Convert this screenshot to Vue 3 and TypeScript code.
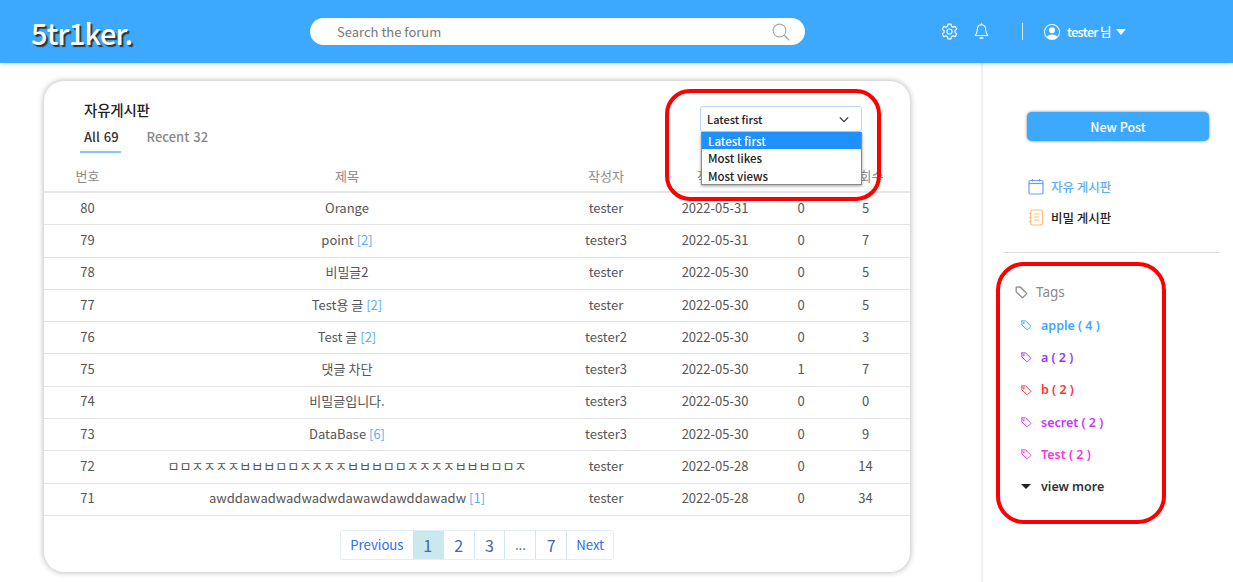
<script setup lang="ts">
interface Row { no: number; title: string; count?: number; author: string; date: string; likes: number; views: number }
const rows: Row[] = [
  { no: 80, title: 'Orange', author: 'tester', date: '2022-05-31', likes: 0, views: 5 },
  { no: 79, title: 'point', count: 2, author: 'tester3', date: '2022-05-31', likes: 0, views: 7 },
  { no: 78, title: '비밀글2', author: 'tester', date: '2022-05-30', likes: 0, views: 5 },
  { no: 77, title: 'Test용 글', count: 2, author: 'tester', date: '2022-05-30', likes: 0, views: 5 },
  { no: 76, title: 'Test 글', count: 2, author: 'tester2', date: '2022-05-30', likes: 0, views: 3 },
  { no: 75, title: '댓글 차단', author: 'tester3', date: '2022-05-30', likes: 1, views: 7 },
  { no: 74, title: '비밀글입니다.', author: 'tester3', date: '2022-05-30', likes: 0, views: 0 },
  { no: 73, title: 'DataBase', count: 6, author: 'tester3', date: '2022-05-30', likes: 0, views: 9 },
  { no: 72, title: 'ㅁㅁㅈㅈㅈㅈㅂㅂㅂㅁㅁㅈㅈㅈㅈㅂㅂㅂㅁㅁㅈㅈㅈㅈㅂㅂㅂㅁㅁㅈ', author: 'tester', date: '2022-05-28', likes: 0, views: 14 },
  { no: 71, title: 'awddawadwadwadwdawawdawddawadw', count: 1, author: 'tester', date: '2022-05-28', likes: 0, views: 34 },
]
const tags = [
  { name: 'apple ( 4 )', color: '#3ca9ff' },
  { name: 'a ( 2 )', color: '#a033ff' },
  { name: 'b ( 2 )', color: '#ff3333' },
  { name: 'secret ( 2 )', color: '#cc33ff' },
  { name: 'Test ( 2 )', color: '#ff33e0' },
]
const tagPath = 'M2 2.5h5.5l6.5 6.5a1 1 0 0 1 0 1.4l-3.6 3.6a1 1 0 0 1-1.4 0L2.5 8V2.5z'
</script>

<template>
  <div class="page">
    <header class="topbar">
      <div class="logo">5tr1ker.</div>
      <div class="search">
        <span class="search-text">Search the forum</span>
        <svg class="search-icon" viewBox="0 0 18 18" width="18" height="18" fill="none" stroke="#a9a9a9" stroke-width="1.1">
          <circle cx="7.5" cy="7.5" r="6.4" /><path d="M12.2 12.2l5 5" stroke-width="1.4" />
        </svg>
      </div>
      <div class="actions">
        <svg class="gear" viewBox="0 0 24 24" width="17" height="17" fill="none" stroke="#fff" stroke-width="1.6" stroke-linejoin="round">
          <circle cx="12" cy="12" r="3.6" />
          <path d="M9.8 1.5h4.4l.6 3.2 2.1 1.2 3.1-1.1 2.2 3.8-2.5 2.1v2.6l2.5 2.1-2.2 3.8-3.1-1.1-2.1 1.2-.6 3.2H9.8l-.6-3.2-2.1-1.2-3.1 1.1-2.2-3.8 2.5-2.1v-2.6L1.8 8.6 4 4.8l3.1 1.1 2.1-1.2z" />
        </svg>
        <svg class="bell" viewBox="0 0 16 18" width="15" height="17" fill="none" stroke="#fff" stroke-width="1.1">
          <path d="M8 1.8c-2.9 0-4.5 2.2-4.5 5 0 3.4-1 5-2.3 6.4h13.6c-1.3-1.4-2.3-3-2.3-6.4 0-2.8-1.6-5-4.5-5z" stroke-linejoin="round" />
          <path d="M8 .4v1.4" /><path d="M6.6 15.8h2.8" stroke-width="1.6" stroke-linecap="round" />
        </svg>
        <span class="vline"></span>
        <svg class="avatar" viewBox="0 0 16 16" width="16" height="16" fill="#fff">
          <path d="M8 9.2a3 3 0 1 0 0-6 3 3 0 0 0 0 6z" />
          <path fill-rule="evenodd" d="M8 0a8 8 0 1 0 0 16A8 8 0 0 0 8 0zM1 8a7 7 0 1 1 12.2 4.7C12.4 11.3 10.4 10.4 8 10.4s-4.400.9-5.200 2.300A7 7 0 0 1 1 8z" />
        </svg>
        <span class="username">tester 님</span>
        <span class="caret"></span>
      </div>
    </header>

    <div class="body">
      <main class="content">
        <section class="card">
          <div class="card-head">
            <div class="titles">
              <h2 class="board-title">자유게시판</h2>
              <div class="tabs">
                <span class="tab active">All 69</span>
                <span class="tab">Recent 32</span>
              </div>
            </div>
            <div class="select-wrap">
              <div class="select">
                <span>Latest first</span>
                <svg viewBox="0 0 12 8" width="10" height="7" fill="none" stroke="#333" stroke-width="1.5"><path d="M1 1.500l5 5 5-5" /></svg>
              </div>
              <ul class="options">
                <li class="selected">Latest first</li>
                <li>Most likes</li>
                <li>Most views</li>
              </ul>
            </div>
          </div>

          <table class="board">
            <colgroup>
              <col class="c-no" /><col class="c-title" /><col class="c-author" /><col class="c-date" /><col class="c-likes" /><col class="c-views" />
            </colgroup>
            <thead>
              <tr><th>번호</th><th>제목</th><th>작성자</th><th>작성일</th><th>추천</th><th>조회수</th></tr>
            </thead>
            <tbody>
              <tr v-for="r in rows" :key="r.no">
                <td>{{ r.no }}</td>
                <td>{{ r.title }}<span v-if="r.count" class="count"> [{{ r.count }}]</span></td>
                <td>{{ r.author }}</td>
                <td>{{ r.date }}</td>
                <td>{{ r.likes }}</td>
                <td>{{ r.views }}</td>
              </tr>
            </tbody>
          </table>

          <nav class="pager">
            <a class="word prev">Previous</a>
            <a class="num current">1</a>
            <a class="num">2</a>
            <a class="num">3</a>
            <a class="num dots">...</a>
            <a class="num">7</a>
            <a class="word next">Next</a>
          </nav>
          <div class="ring ring-select"></div>
        </section>
      </main>

      <aside class="side">
        <button class="new-post">New Post</button>
        <div class="boards">
          <div class="board-link blue">
            <svg viewBox="0 0 16 17" width="16" height="17" fill="none" stroke="#6e9bff" stroke-width="1.2">
              <rect x="1" y="2.500" width="14" height="13.500" rx="1.500" /><path d="M1 5.500h14" /><path d="M4.500 1v2.500M11.500 1v2.500" />
            </svg>
            <span>자유 게시판</span>
          </div>
          <div class="board-link">
            <svg viewBox="0 0 16 17" width="16" height="17" fill="none" stroke="#ffbe73" stroke-width="1.2">
              <rect x="2.500" y="1" width="12" height="15" rx="2" /><path d="M6 5h5.500M6 8h5.500M6 11h5.500" /><path d="M1 4.500h2.500M1 8.500h2.500M1 12.500h2.500" />
            </svg>
            <span>비밀 게시판</span>
          </div>
        </div>
        <hr class="divider" />
        <div class="tags">
          <div class="tags-title">
            <svg viewBox="0 0 16 16" width="14" height="14" fill="none" stroke="#8f8f8f" stroke-width="1.500"><path :d="tagPath" /><path d="M5.500 1l8 8" stroke-width="1" /></svg>
            <span>Tags</span>
          </div>
          <div v-for="t in tags" :key="t.name" class="tag" :style="{ color: t.color }">
            <svg viewBox="0 0 16 16" width="12" height="12" fill="none" stroke="currentColor" stroke-width="1.300"><path :d="tagPath" /><circle cx="5" cy="5.500" r=".8" /></svg>
            <span>{{ t.name }}</span>
          </div>
          <div class="tag more">
            <span class="more-caret"></span>
            <span>view more</span>
          </div>
        </div>
        <div class="ring ring-tags"></div>
      </aside>
    </div>
  </div>
</template>

<style>
html, body { margin: 0; background: #fff; overflow: hidden; }
</style>

<style scoped>
.page {
  width: 1233px;
  height: 582px;
  overflow: hidden;
  font-family: "Noto Sans CJK KR", "Noto Sans", sans-serif;
  color: #555;
  display: flex;
  flex-direction: column;
}
.topbar {
  height: 63px;
  flex: none;
  background: #3ca9ff;
  box-shadow: 0 1px 5px rgba(0, 0, 0, .18);
  display: flex;
  align-items: center;
  position: relative;
  z-index: 2;
}
.logo {
  margin-left: 31px;
  width: 279px;
  font-family: "Noto Sans CJK KR", "Noto Sans", sans-serif;
  font-size: 29px;
  font-weight: 500;
  letter-spacing: -.7px;
  line-height: 36px;
  color: #fff;
  text-shadow: 2px 2px 1px #333;
}
.search {
  width: 495px;
  height: 27px;
  background: #fff;
  border-radius: 14px;
  display: flex;
  align-items: center;
  justify-content: space-between;
  padding: 0 15px 0 27px;
  box-sizing: border-box;
}
.search-text { font-size: 13px; color: #777; }
.search-icon { flex: none; }
.actions {
  margin-left: 136px;
  display: flex;
  align-items: center;
  color: #fff;
}
.bell { margin-left: 16px; }
.vline { width: 1px; height: 17px; background: rgba(255, 255, 255, .75); margin: 0 21px 0 33px; }
.username { margin-left: 7px; font-size: 12.500px; font-weight: 500; letter-spacing: -.6px; }
.caret {
  margin-left: 5px;
  width: 0;
  height: 0;
  border: 5px solid transparent;
  border-top: 6px solid #fff;
  border-bottom: 0;
}
.body { flex: 1; display: flex; min-height: 0; }
.content { width: 981px; flex: none; padding: 18px 0 0 44px; box-sizing: border-box; }
.card {
  position: relative;
  width: 866px;
  height: 491px;
  box-sizing: border-box;
  background: #fff;
  border-radius: 20px;
  box-shadow: 0 0 6px rgba(0, 0, 0, .32);
}
.card-head { display: flex; justify-content: space-between; height: 83px; }
.titles { padding: 18px 0 0 36px; }
.board-title { margin: 0 0 0 4px; font-size: 14.500px; line-height: 22px; font-weight: 500; color: #222; letter-spacing: -.2px; }
.tabs { display: flex; margin-top: 6px; gap: 26px; }
.tab { font-size: 13px; line-height: 20px; padding: 0 0 4px; color: #888; font-weight: 500; word-spacing: 1px; }
.tab.active { color: #333; padding: 0 2px 4px 4px; border-bottom: 2px solid #7ecbef; }
.select-wrap { position: relative; width: 162px; margin: 25px 48px 0 0; z-index: 3; }
.select {
  height: 26px;
  box-sizing: border-box;
  border: 1px solid #b5d6f7;
  border-radius: 3px;
  background: #fff;
  display: flex;
  align-items: center;
  justify-content: space-between;
  padding: 0 12px 0 6px;
  font-size: 11px;
  font-weight: 500;
  color: #222;
}
.options {
  position: absolute;
  top: 26px;
  left: 1px;
  right: 0;
  margin: 0;
  padding: 0;
  list-style: none;
  background: #fff;
  border: 1px solid #8a8a8a;
  border-top: 0;
  box-shadow: 0 1px 3px rgba(0, 0, 0, .4);
  font-size: 11.500px;
  font-weight: 500;
  line-height: 16.300px;
  color: #222;
}
.options li { padding: 1px 0 0 6px; }
.options li.selected { background: #1e90ff; color: #fff; }
.board { width: 866px; table-layout: fixed; border-collapse: collapse; font-size: 13px; }
.c-no { width: 87px; }
.c-title { width: 432px; }
.c-author { width: 86px; }
.c-date { width: 132px; }
.c-likes { width: 40px; }
.c-views { width: 89px; }
th {
  height: 22px;
  padding: 0 0 5px;
  font-weight: 400;
  font-size: 13px;
  color: #8a8a8a;
  border-bottom: 2px solid #e6e6e6;
}
td {
  height: 28.300px;
  padding: 0 0 3px;
  text-align: center;
  color: #555;
  border-bottom: 1px solid #e3e3e3;
  white-space: nowrap;
}
.count { color: #5aaef5; }
.pager {
  display: flex;
  justify-content: flex-start;
  margin: 14px 0 0 296px;
  width: 274px;
  height: 30px;
  box-sizing: border-box;
  border: 1px solid #e2edf5;
  border-radius: 3px;
}
.pager a {
  display: flex;
  align-items: center;
  justify-content: center;
  border-right: 1px solid #cfe6fa;
  box-sizing: border-box;
}
.word { font-size: 13.200px; color: #2a6ff0; }
.prev { width: 72px; border-right: 0 !important; }
.next { width: 46px; border-right: 0 !important; }
.num { width: 31px; font-size: 16px; color: #4b63b0; }
.dots { font-size: 13px; }
.current { width: 31px; background: #c9e9ee; }
.side { position: relative; flex: 1; border-left: 2px solid #f0f0f0; box-sizing: border-box; padding: 49px 14px 0 20px; }
.new-post {
  display: block;
  margin-left: 24px;
  width: 182px;
  height: 29px;
  border: 0;
  border-radius: 5px;
  background: #3ca9ff;
  box-shadow: 0 0 3px rgba(0, 0, 0, .5);
  color: #fff;
  font-family: inherit;
  font-size: 12.500px;
  font-weight: 500;
  padding: 0;
}
.boards { margin: 35px 0 0 25px; display: flex; flex-direction: column; gap: 10px; }
.board-link { display: flex; align-items: center; gap: 7px; height: 21px; font-size: 12.500px; font-weight: 500; color: #222; }
.board-link.blue { color: #5aaef5; }
.divider { margin: 24px 0 0 0; border: 0; border-top: 1px solid #ddd; }
.tags { margin: 29px 0 0 11px; font-family: "Noto Sans", sans-serif; }
.tags-title { display: flex; align-items: center; gap: 8px; height: 20px; font-size: 13.500px; color: #8a8a8a; }
.tag { display: flex; align-items: center; gap: 9px; height: 32.300px; margin-left: 6px; font-size: 12.500px; font-weight: 600; }
.tags-title + .tag { margin-top: 7px; }
.more { color: #333; gap: 10px; }
.more-caret { margin-left: 1px; width: 0; height: 0; border: 5px solid transparent; border-top: 5px solid #222; border-bottom: 0; }
.ring { position: absolute; box-sizing: border-box; border: 4px solid #f00; pointer-events: none; z-index: 5; }
.ring-select { left: 621px; top: 8px; width: 216px; height: 112px; border-radius: 25px; }
.ring-tags { left: 13px; top: 199px; width: 170px; height: 262px; border-radius: 28px; }
</style>
